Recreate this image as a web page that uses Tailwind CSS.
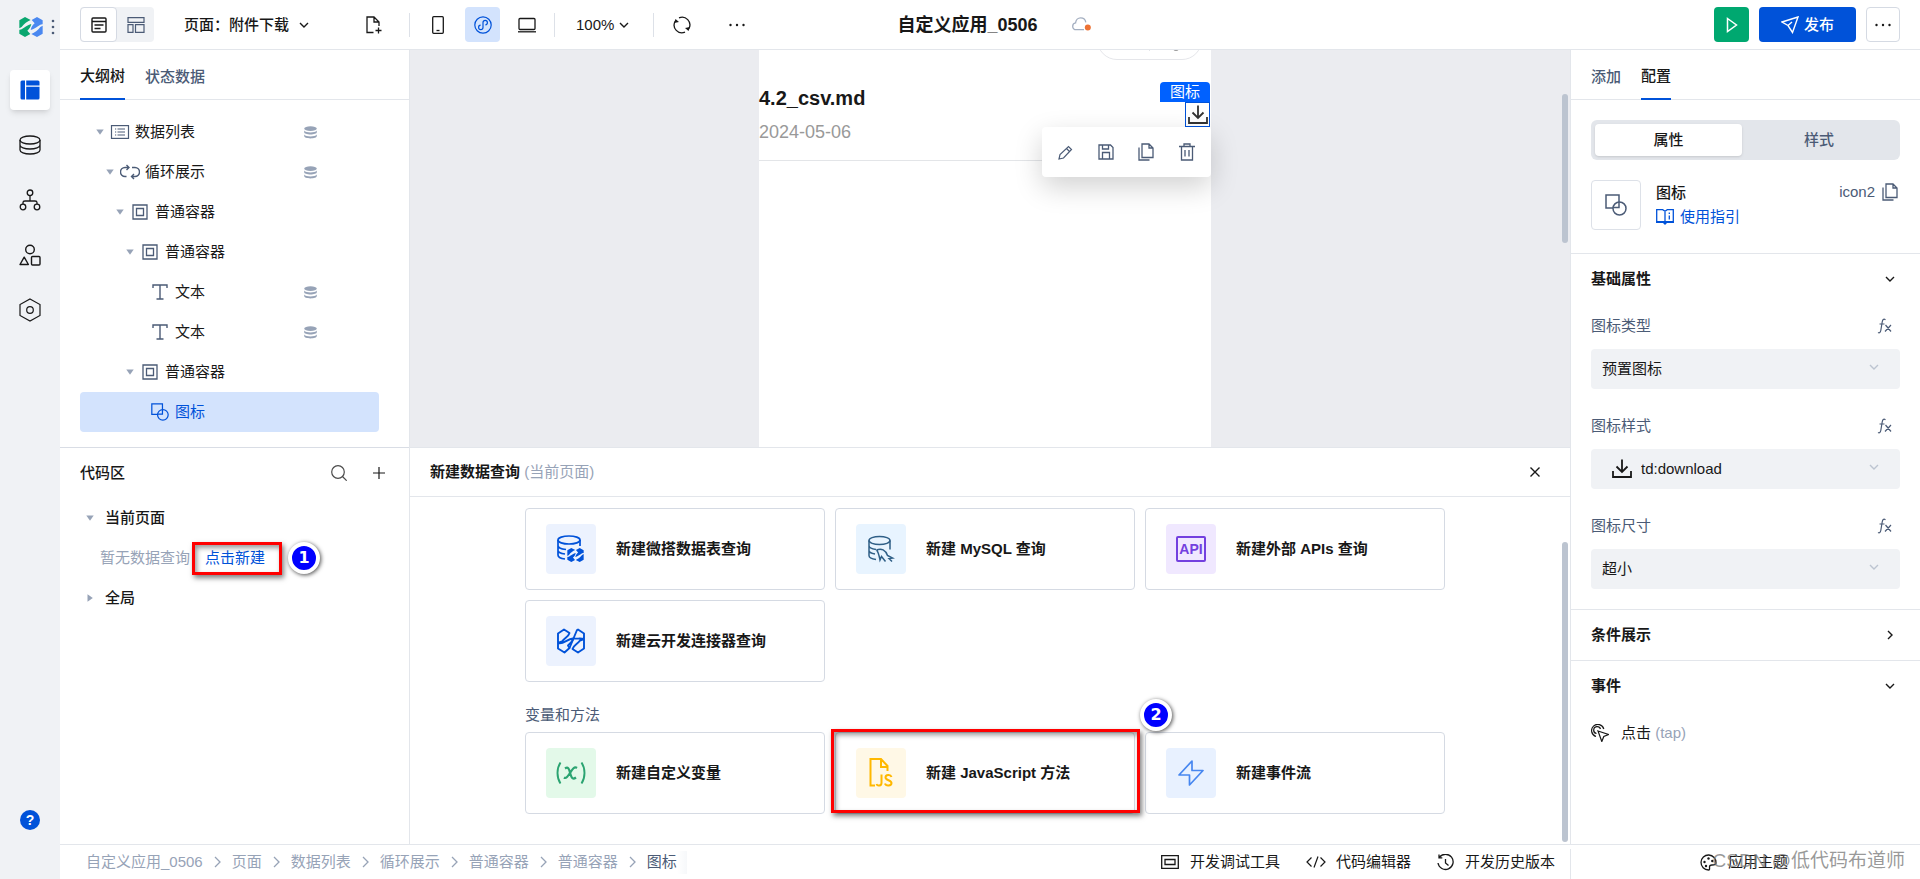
<!DOCTYPE html>
<html lang="zh-CN">
<head>
<meta charset="utf-8">
<meta name="viewport" content="width=device-width, initial-scale=1">
<title>自定义应用_0506</title>
<script src="https://cdn.jsdelivr.net/npm/@tailwindcss/browser@4"></script>
</head>
<body class="flex h-screen overflow-hidden bg-white font-['Liberation_Sans','Noto_Sans_CJK_SC',sans-serif] text-[15px] leading-5 text-[#181818]">

<svg class="hidden" aria-hidden="true">
  <symbol id="db" viewBox="0 0 13 13"><g fill="currentColor"><ellipse cx="6.500" cy="2.600" rx="6.300" ry="2.400"/><path d="M.2 4.600c1 1.400 3.500 1.900 6.300 1.900s5.300-.5 6.300-1.900v1.700c0 1.300-2.800 2.200-6.300 2.200S.2 7.600.2 6.300z"/><path d="M.2 8.500c1 1.400 3.500 1.900 6.300 1.900s5.300-.5 6.300-1.900v1.600c0 1.400-2.800 2.400-6.300 2.400S.2 11.500.2 10.100z"/></g></symbol>
  <symbol id="caret" viewBox="0 0 8 6"><path d="M.3.500h7.400L4 5.800z" fill="currentColor"/></symbol>
  <symbol id="down" viewBox="0 0 10 6"><path d="M1 1l4 4 4-4" fill="none" stroke="currentColor" stroke-width="1.400"/></symbol>
  <symbol id="box" viewBox="0 0 16 16"><g fill="none" stroke="currentColor" stroke-width="1.300"><path d="M1 1h14v14H1z"/><path d="M4.500 4.500h7v7h-7z"/></g></symbol>
  <symbol id="tee" viewBox="0 0 16 16"><path d="M1 4V1h14v3M8 1v14M4.500 15h7" fill="none" stroke="currentColor" stroke-width="1.400"/></symbol>
  <symbol id="shape" viewBox="0 0 22 22"><g fill="none" stroke="currentColor" stroke-width="1.500"><path d="M8 14H1V1h13v7"/><path d="M14 8v5.500H8"/><circle cx="14.500" cy="14.500" r="6.500"/></g></symbol>
  <symbol id="copy" viewBox="0 0 16 18"><path d="M4 1h7l4 4v9.500H4zM11 1v4h4M1 4.500V17h10.500" fill="none" stroke="currentColor" stroke-width="1.300"/></symbol>
  <symbol id="download" viewBox="0 0 20 20"><path d="M10 .500v12M4.500 7.500l5.500 5.500 5.500-5.500M1 12v6h18v-6" fill="none" stroke="currentColor" stroke-width="1.800"/></symbol>
  <symbol id="sep" viewBox="0 0 7 12"><path d="M1 1l5 5-5 5" fill="none" stroke="currentColor" stroke-width="1.300"/></symbol>
  <symbol id="fx" viewBox="0 0 16 16"><path d="M8.500 1.800C6.500.4 5.600 1.700 5.200 4L3.800 12.500C3.400 14.600 2.400 15.300 1 14.500M2.500 6h5M8.500 7l5.500 6.500M14 7l-6 6.500" fill="none" stroke="currentColor" stroke-width="1.200"/></symbol>
  <symbol id="dots" viewBox="0 0 16 4"><g fill="currentColor"><circle cx="1.500" cy="2" r="1.200"/><circle cx="8" cy="2" r="1.200"/><circle cx="14.500" cy="2" r="1.200"/></g></symbol>
  <symbol id="half" viewBox="0 0 72 60"><path fill="currentColor" d="M1 10L18 0l17 9C25 13 15 20 8 30L1 34zM1 38C8 40 16 28 37 21 35 30 31 36 25 41L34 51 18 60 1 50z"/></symbol>
</svg>

<nav class="flex w-15 shrink-0 flex-col items-center bg-[#f0f2f5]" aria-label="主导航">
  <button class="flex h-[54px] w-full items-center gap-2 pl-[19px]" aria-label="应用菜单">
    <svg class="h-5 w-6" viewBox="0 0 72 60"><use href="#half" width="72" height="60" class="text-[#0aa76f]"/><g transform="rotate(180 36 30)"><use href="#half" width="72" height="60" class="text-[#4a88f0]"/></g></svg>
    <svg class="h-4 w-1" viewBox="0 0 4 16" fill="#4b5b76"><circle cx="2" cy="2" r="1.300"/><circle cx="2" cy="8" r="1.300"/><circle cx="2" cy="14" r="1.300"/></svg>
  </button>
  <div class="flex flex-1 flex-col gap-[15px] pt-4">
    <button class="flex size-10 items-center justify-center rounded bg-white shadow-md" aria-label="页面设计"><svg class="size-5" viewBox="0 0 20 20" fill="#0052d9"><path d="M2 .500h3V19.500H2A1.500 1.500 0 0 1 .5 18V2A1.500 1.500 0 0 1 2 .5zM6.200.500H18A1.500 1.500 0 0 1 19.500 2v3.500H6.200zM6.200 6.700h13.300V18a1.500 1.500 0 0 1-1.500 1.500H6.200z"/></svg></button>
    <button class="flex size-10 items-center justify-center" aria-label="数据源"><svg class="h-5 w-[22px]" viewBox="0 0 22 20" fill="none" stroke="currentColor" stroke-width="1.300"><ellipse cx="11" cy="5" rx="10" ry="4"/><path d="M1 5v10c0 2.200 4.500 4 10 4s10-1.800 10-4V5M1 10c0 2.200 4.500 4 10 4s10-1.800 10-4"/></svg></button>
    <button class="flex size-10 items-center justify-center" aria-label="流程"><svg class="size-[22px]" viewBox="0 0 22 22" fill="none" stroke="currentColor" stroke-width="1.300"><circle cx="11" cy="3.800" r="2.800"/><path d="M11 6.600V12M4 15v-1.500C4 12.500 5 12 6 12h10c1 0 2 .5 2 1.500V15"/><circle cx="4" cy="18" r="2.800"/><circle cx="18" cy="18" r="2.800"/></svg></button>
    <button class="flex size-10 items-center justify-center" aria-label="组件"><svg class="size-[22px]" viewBox="0 0 22 22" fill="none" stroke="currentColor" stroke-width="1.400"><circle cx="11" cy="5.500" r="4.300"/><path d="M5.200 13.200l4.200 7.300H1z" stroke-linejoin="round"/><rect x="12.500" y="12.500" width="8.500" height="8.500" rx="1"/></svg></button>
    <button class="flex size-10 items-center justify-center" aria-label="设置"><svg class="h-6 w-[22px]" viewBox="0 0 22 24" fill="none" stroke="currentColor" stroke-width="1.200"><path d="M11 1l10 5.500v11L11 23 1 17.500v-11z"/><circle cx="11" cy="12" r="3.300"/></svg></button>
  </div>
  <button class="mb-[49px] flex size-5 items-center justify-center rounded-full bg-[#0052d9] text-sm font-bold text-white" aria-label="帮助">?</button>
</nav>

<div class="flex min-w-0 flex-1 flex-col">
  <header class="flex h-[50px] shrink-0 items-center border-b border-[#e3e6eb] pr-5 pl-5">
    <div class="flex flex-1 items-center">
      <div class="flex rounded bg-[#f0f2f5]">
        <button class="flex h-[35px] w-[37px] items-center justify-center rounded border border-[#d5dae3] bg-white" aria-label="设计视图"><svg class="size-4" viewBox="0 0 16 16" fill="none" stroke="currentColor" stroke-width="1.400"><rect x="1" y="1" width="14" height="14" rx="1"/><path d="M1 4.500h14M3.500 8h9M3.500 11.500h6"/></svg></button>
        <button class="flex h-[35px] w-[37px] items-center justify-center text-[#4b5b76]" aria-label="布局视图"><svg class="h-4 w-[18px]" viewBox="0 0 18 16" fill="none" stroke="currentColor" stroke-width="1.200"><path d="M1 .600h16v4.800H1zM1 7.600h5v7.800H1zM8.500 7.600H17v7.800H8.500z"/></svg></button>
      </div>
      <button class="ml-[30px] flex items-center gap-[10px] font-medium whitespace-nowrap">页面：附件下载<svg class="h-[6px] w-[10px]"><use href="#down"/></svg></button>
      <button class="ml-[57px]" aria-label="新建页面"><svg class="h-[18px] w-4" viewBox="0 0 16 18" fill="none" stroke="currentColor" stroke-width="1.300"><path d="M7.500 16.500H1V1h7l5 5v4M8 1v5h5M12.500 11.500v6M9.500 14.500h6"/></svg></button>
      <span class="ml-[27px] h-6 w-px bg-[#dde1e8]"></span>
      <button class="ml-[22px]" aria-label="手机"><svg class="h-[18px] w-3" viewBox="0 0 12 18" fill="none" stroke="currentColor" stroke-width="1.300"><rect x=".7" y=".7" width="10.600" height="16.600" rx="1"/><path d="M4.500 14.500h3"/></svg></button>
      <button class="ml-[21px] flex size-[35px] items-center justify-center rounded bg-[#d3e3fd] text-[#0052d9]" aria-label="小程序"><svg class="size-[18px]" viewBox="0 0 18 18" fill="none" stroke="currentColor" stroke-width="1.200"><circle cx="9" cy="9" r="8.200"/><path d="M6.600 9.200a2.200 2.200 0 1 0 2.400 2.300V6.500a2.200 2.200 0 1 1 2.400 2.300"/></svg></button>
      <button class="ml-[18px]" aria-label="电脑"><svg class="h-4 w-[18px]" viewBox="0 0 18 16" fill="none" stroke="currentColor" stroke-width="1.300"><rect x="1" y="1.500" width="16" height="11" rx="1"/><path d="M0 14.800h18"/></svg></button>
      <span class="ml-[18px] h-6 w-px bg-[#dde1e8]"></span>
      <button class="ml-[21px] flex items-center gap-[5px]">100%<svg class="h-[6px] w-[10px]"><use href="#down"/></svg></button>
      <span class="ml-6 h-6 w-px bg-[#dde1e8]"></span>
      <button class="ml-[19px]" aria-label="刷新"><svg class="size-[18px]" viewBox="0 0 18 18"><path d="M6 1.800A7.800 7.800 0 0 1 16 12.500M12 16.200A7.800 7.800 0 0 1 2 5.500" fill="none" stroke="currentColor" stroke-width="1.300"/><path d="M1 7l1.500-4 3.500 3zM17 11l-1.500 4-3.500-3z" fill="currentColor"/></svg></button>
      <button class="ml-[38px]" aria-label="更多工具"><svg class="h-1 w-4"><use href="#dots"/></svg></button>
    </div>
    <div class="flex items-center gap-[34px] pl-2">
      <h1 class="text-lg leading-6 font-bold whitespace-nowrap">自定义应用_0506</h1>
      <svg class="h-[15px] w-[19px]" viewBox="0 0 19 15"><path d="M12 12.700H4.500C2.300 12.700.7 11.200.7 9.200.7 7.300 2 6 3.600 5.800 3.900 3 6 .800 8.600.800c2.800 0 4.900 2 5.200 4.600" fill="none" stroke="#a3aec0" stroke-width="1.300"/><circle cx="15.800" cy="10.600" r="3" fill="#ed7234"/></svg>
    </div>
    <div class="flex flex-1 items-center justify-end gap-[10px]">
      <button class="flex size-[35px] items-center justify-center rounded bg-[#00a870] text-white" aria-label="预览"><svg class="h-4 w-3" viewBox="0 0 12 16" fill="none" stroke="currentColor" stroke-width="1.500"><path d="M1.500 1.500l9 6.500-9 6.500z"/></svg></button>
      <button class="flex h-[35px] w-[97px] items-center justify-center gap-[5px] rounded bg-[#0052d9] font-medium text-white"><svg class="size-[18px]" viewBox="0 0 18 18" fill="none" stroke="currentColor" stroke-width="1.400"><path d="M17 1L1 6l6 3.500L11.500 16.500zM7 9.500l4-3.500"/></svg>发布</button>
      <button class="flex h-[35px] w-[34px] items-center justify-center rounded border border-[#d5dae3]" aria-label="更多"><svg class="h-1 w-4"><use href="#dots"/></svg></button>
    </div>
  </header>

  <div class="flex min-h-0 flex-1">
    <aside class="flex w-[350px] shrink-0 flex-col border-r border-[#e3e6eb]">
      <section class="min-h-0 flex-1 basis-0">
        <div class="flex h-[50px] gap-5 border-b border-[#e3e6eb] px-5 font-medium">
          <button class="-mb-px border-b-2 border-[#0052d9] pt-1">大纲树</button>
          <button class="pt-1 text-[#4b5b76]">状态数据</button>
        </div>
        <ul class="pt-3 pr-[30px] pl-5">
          <li class="flex h-10 items-center pr-[62px] pl-[10px]"><svg class="mx-[6px] h-[6px] w-2 text-[#97a3b7]"><use href="#caret"/></svg><svg class="mr-[5px] h-[14px] w-5 text-[#4b5b76]" viewBox="0 0 20 14" fill="none" stroke="currentColor" stroke-width="1.200"><rect x="1.500" y=".6" width="17" height="12.800"/><path d="M7.500 4H15M7.500 7H15M7.500 10H15M5 4h1.200M5 7h1.200M5 10h1.200"/></svg><span class="flex-1">数据列表</span><svg class="size-[13px] text-[#97a3b7]"><use href="#db"/></svg></li>
          <li class="flex h-10 items-center pr-[62px] pl-5"><svg class="mx-[6px] h-[6px] w-2 text-[#97a3b7]"><use href="#caret"/></svg><svg class="mr-[5px] h-4 w-5 text-[#4b5b76]" viewBox="0 0 20 16" fill="none" stroke="currentColor" stroke-width="1.400"><path d="M6.500 12.500H5A4.300 4.300 0 0 1 5 3.500h3.500M6.500 1l2.500 2.500L6.500 6M12 3.500h3a4.300 4.300 0 0 1 0 9h-3.500M14 10l-2.500 2.500L14 15"/></svg><span class="flex-1">循环展示</span><svg class="size-[13px] text-[#97a3b7]"><use href="#db"/></svg></li>
          <li class="flex h-10 items-center pl-[30px]"><svg class="mx-[6px] h-[6px] w-2 text-[#97a3b7]"><use href="#caret"/></svg><svg class="mr-[7px] ml-[2px] size-4 text-[#4b5b76]"><use href="#box"/></svg>普通容器</li>
          <li class="flex h-10 items-center pl-10"><svg class="mx-[6px] h-[6px] w-2 text-[#97a3b7]"><use href="#caret"/></svg><svg class="mr-[7px] ml-[2px] size-4 text-[#4b5b76]"><use href="#box"/></svg>普通容器</li>
          <li class="flex h-10 items-center pr-[62px] pl-[70px]"><svg class="mr-[7px] ml-[2px] size-4 text-[#4b5b76]"><use href="#tee"/></svg><span class="flex-1">文本</span><svg class="size-[13px] text-[#97a3b7]"><use href="#db"/></svg></li>
          <li class="flex h-10 items-center pr-[62px] pl-[70px]"><svg class="mr-[7px] ml-[2px] size-4 text-[#4b5b76]"><use href="#tee"/></svg><span class="flex-1">文本</span><svg class="size-[13px] text-[#97a3b7]"><use href="#db"/></svg></li>
          <li class="flex h-10 items-center pl-10"><svg class="mx-[6px] h-[6px] w-2 text-[#97a3b7]"><use href="#caret"/></svg><svg class="mr-[7px] ml-[2px] size-4 text-[#4b5b76]"><use href="#box"/></svg>普通容器</li>
          <li class="flex h-10 items-center rounded bg-[#d3e3fd] pl-[70px] text-[#0052d9]"><svg class="mr-[6px] ml-px size-[18px]"><use href="#shape"/></svg>图标</li>
        </ul>
      </section>
      <section class="min-h-0 flex-1 basis-0 border-t border-[#d9dde5]">
        <div class="flex h-[50px] items-center pr-6 pl-5">
          <h2 class="flex-1 font-medium">代码区</h2>
          <button class="mr-[26px]" aria-label="搜索"><svg class="size-4 text-[#4b4b4b]" viewBox="0 0 16 16" fill="none" stroke="currentColor" stroke-width="1.200"><circle cx="7" cy="7" r="6.300"/><path d="M11.500 11.500L15.700 15.700"/></svg></button>
          <button aria-label="新增"><svg class="size-3" viewBox="0 0 12 12" fill="none" stroke="currentColor" stroke-width="1.200"><path d="M6 0v12M0 6h12"/></svg></button>
        </div>
        <div class="flex h-10 items-center pl-[26px] font-medium"><svg class="mr-[11px] h-[6px] w-2 text-[#97a3b7]"><use href="#caret"/></svg>当前页面</div>
        <div class="flex h-10 items-center pl-10 text-[#97a3b7]">暂无数据查询
          <div class="relative ml-[15px]">
            <a href="#new" class="text-[#0052d9]">点击新建</a>
            <span class="pointer-events-none absolute -top-[6px] -right-[17px] -left-[13px] h-[33px] border-3 border-[#ff0000] shadow-[2px_3px_5px_rgba(0,0,0,.5),inset_2px_3px_5px_rgba(0,0,0,.4)]"></span>
            <span class="absolute -top-[6px] -right-[55px] flex size-8 items-center justify-center rounded-full border-4 border-white bg-[#0000ff] font-['DejaVu_Sans',sans-serif] text-base font-bold text-white shadow-[1px_1px_4px_rgba(0,0,0,.7)]">1</span>
          </div>
        </div>
        <div class="flex h-10 items-center pl-[26px] font-medium"><svg class="mr-[11px] h-[6px] w-2 -rotate-90 text-[#97a3b7]"><use href="#caret"/></svg>全局</div>
      </section>
    </aside>

    <main class="flex min-w-0 flex-1 flex-col">
      <section class="flex min-h-0 flex-1 basis-0 justify-center bg-[#ebecf0]">
        <div class="flex flex-1 justify-center">
          <div class="relative w-[452px] bg-white">
            <div class="absolute top-0 right-[9px] h-[10px] w-[105px] overflow-hidden">
              <div class="absolute bottom-0 flex h-10 w-full items-center justify-center rounded-full border border-[#e5e6ea]"><span class="h-[22px] w-px bg-[#e5e6ea]"></span><span class="absolute right-[22px] bottom-[8px] size-[6px] rounded-full bg-[#999]"></span></div>
            </div>
            <div class="flex flex-col gap-2 border-b border-[#e3e5e8] pt-[34px] pb-4">
              <strong class="text-xl leading-7">4.2_csv.md</strong>
              <span class="text-lg leading-6 text-[#999]">2024-05-06</span>
            </div>
            <div class="absolute top-8 right-px h-5 w-[50px] rounded-t bg-[#0061ff] text-center leading-5 text-white">图标</div>
            <div class="absolute top-[52px] right-px flex size-[25px] items-center justify-center border border-[#0052d9] text-[#333]"><svg class="size-5"><use href="#download"/></svg></div>
            <div class="absolute top-[77px] right-0 flex h-[50px] w-[169px] items-center justify-around rounded bg-white px-1 text-[#4b5b76] shadow-[0_10px_28px_rgba(0,0,0,.18)]">
              <button aria-label="编辑"><svg class="size-[15px]" viewBox="0 0 15 15" fill="none" stroke="currentColor" stroke-width="1.200"><path d="M1 14l1-4.500L10.500 1.500l3 3L5.500 13zM8.500 3.500l3 3"/></svg></button>
              <button aria-label="保存"><svg class="size-4" viewBox="0 0 16 16" fill="none" stroke="currentColor" stroke-width="1.300"><path d="M1 1h11.500L15 3.500V15H1zM4.500 1v4h6V1M4.500 15V8.500h7V15"/></svg></button>
              <button aria-label="复制"><svg class="h-[18px] w-4"><use href="#copy"/></svg></button>
              <button aria-label="删除"><svg class="h-[18px] w-4" viewBox="0 0 16 18" fill="none" stroke="currentColor" stroke-width="1.300"><path d="M0 3.500h16M5 3.500V1h6v2.500M2.500 3.500V17h11V3.500M6 7v6.500M10 7v6.500"/></svg></button>
            </div>
          </div>
        </div>
        <div class="w-[10px] px-[2px] pt-11"><div class="h-[149px] rounded-full bg-[#bcc4d0]"></div></div>
      </section>

      <section class="flex min-h-0 flex-1 basis-0 flex-col border-t border-[#e3e6eb]">
        <div class="flex h-[49px] shrink-0 items-center border-b border-[#e3e6eb] pr-[30px] pl-5">
          <h2 class="flex-1 font-bold">新建数据查询 <span class="font-normal text-[#97a3b7]">(当前页面)</span></h2>
          <button aria-label="关闭"><svg class="size-[10px]" viewBox="0 0 10 10" fill="none" stroke="currentColor" stroke-width="1.400"><path d="M.500.500l9 9M9.500.500l-9 9"/></svg></button>
        </div>
        <div class="flex min-h-0 flex-1">
          <div class="flex min-w-0 flex-1 flex-col items-center justify-end overflow-hidden pb-[30px]">
            <div class="flex w-[920px] max-w-full flex-col text-[#4b5b76]">
              <h3 class="mb-[10px]">数据 Query</h3>
              <div class="mb-[23px] grid grid-cols-3 gap-[10px] font-bold text-[#181818]">
                <button class="flex h-[82px] items-center gap-5 rounded border border-[#d5dae3] px-5 text-left"><span class="flex size-[50px] items-center justify-center rounded bg-[#ecf2fe] text-[#0052d9]"><svg class="size-7" viewBox="0 0 28 28"><path d="M1 5v15c0 2 3 3.500 7 4M23 5v6M1 10.500c0 2 3.500 3.500 8 4M1 15.500c0 2 3 3 7 3.500" fill="none" stroke="currentColor" stroke-width="1.700"/><ellipse cx="12" cy="5" rx="11" ry="4" fill="none" stroke="currentColor" stroke-width="1.700"/><svg x="10" y="13" width="17" height="14" viewBox="0 0 72 60"><use href="#half" width="72" height="60"/><g transform="rotate(180 36 30)"><use href="#half" width="72" height="60"/></g></svg></svg></span>新建微搭数据表查询</button>
                <button class="flex h-[82px] items-center gap-5 rounded border border-[#d5dae3] px-5 text-left"><span class="flex size-[50px] items-center justify-center rounded bg-[#e8f4ff] text-[#2f5f87]"><svg class="size-7" viewBox="0 0 28 28" fill="none" stroke="currentColor" stroke-width="1.500"><ellipse cx="12.500" cy="5.500" rx="10.500" ry="4"/><path d="M2 5.500v15c0 2 3 3.500 7 4M23 5.500v9M2 10.500c0 2 3 3.500 7 4M2 15.500c0 2 3 3 6 3.500M9.500 15c5-2 9 0 11 5.500l5 2.500-3.500.5 3 3M9.500 15c2 2 2.500 5 3.500 10l1.500-3.500 4 5"/></svg></span>新建 MySQL 查询</button>
                <button class="flex h-[82px] items-center gap-5 rounded border border-[#d5dae3] px-5 text-left"><span class="flex size-[50px] items-center justify-center rounded bg-[#f0e8ff] text-[#7340df]"><span class="flex h-[26px] w-[30px] items-center justify-center rounded-xs border-2 border-current text-sm font-bold">API</span></span>新建外部 APIs 查询</button>
                <button class="flex h-[82px] items-center gap-5 rounded border border-[#d5dae3] px-5 text-left"><span class="flex size-[50px] items-center justify-center rounded bg-[#ecf2fe] text-[#0052d9]"><svg class="h-[26px] w-7" viewBox="0 0 28 26" fill="none" stroke="currentColor" stroke-width="1.900" stroke-linejoin="round"><path d="M1 5.500L7 1.500l5.500 3.500c-1 4-5 5-7.500 8.500L1 15zM1 15c5 2 9-4 15-4.500 0 3-3 5-5 7L12.500 20l-5 4.500-6.500-4z"/><path d="M27 20.500l-6 4-5.500-3.500c1-4 5-5 7.500-8.500l4-1.500zM27 11c-3-1-7 0-11-.5M12.500 20L20 2l1-.5 6 4V11"/></svg></span>新建云开发连接器查询</button>
              </div>
              <h3 class="mb-[7px]">变量和方法</h3>
              <div class="grid grid-cols-3 gap-[10px] font-bold text-[#181818]">
                <button class="flex h-[82px] items-center gap-5 rounded border border-[#d5dae3] px-5 text-left"><span class="flex size-[50px] items-center justify-center rounded bg-[#e3f9e9] text-[#2ba471]"><svg class="h-6 w-[30px]" viewBox="0 0 30 24" fill="none" stroke="currentColor" stroke-width="1.900"><path d="M4.500 1.500c-4 6-4 15 0 21M25.500 1.500c4 6 4 15 0 21"/><path d="M9 7.500c3-2 4 0 5 4s2 8 6 5M21 7c-3-2-5 2-7 5s-4 6-6 4.500" stroke-width="2.200"/></svg></span>新建自定义变量</button>
                <div class="relative">
                  <button class="flex h-[82px] w-full items-center gap-5 rounded border border-[#d5dae3] px-5 text-left"><span class="flex size-[50px] items-center justify-center rounded bg-[#fff8e6] text-[#ffb800]"><svg class="h-[30px] w-6" viewBox="0 0 24 30" fill="none" stroke="currentColor" stroke-width="2"><path d="M6 27.500H1.500V1H12l6.500 7v5M12 1v8h6.500M12.500 16.500V25c0 3-4 3.500-5 1M22.500 19c-1-3-6-2.500-6 .5s6 2.500 6 5.500-5.500 3.500-6.500 .5"/></svg></span>新建 JavaScript 方法</button>
                  <span class="pointer-events-none absolute -top-[3px] -right-[5px] bottom-px -left-[4px] border-3 border-[#ff0000] shadow-[2px_3px_5px_rgba(0,0,0,.5),inset_2px_3px_5px_rgba(0,0,0,.4)]"></span>
                  <span class="absolute -top-[33px] -right-[37px] flex size-8 items-center justify-center rounded-full border-4 border-white bg-[#0000ff] font-['DejaVu_Sans',sans-serif] text-base font-bold text-white shadow-[1px_1px_4px_rgba(0,0,0,.7)]">2</span>
                </div>
                <button class="flex h-[82px] items-center gap-5 rounded border border-[#d5dae3] px-5 text-left"><span class="flex size-[50px] items-center justify-center rounded bg-[#e8f1ff] text-[#4787f0]"><svg class="size-[26px]" viewBox="0 0 26 26" fill="none" stroke="currentColor" stroke-width="1.700" stroke-linejoin="round"><path d="M14 1L1 15h10.500v10L25 10.500H14z"/></svg></span>新建事件流</button>
              </div>
            </div>
          </div>
          <div class="flex w-[10px] flex-col px-[2px] pt-[45px] pb-[2px]"><div class="flex-1 rounded-full bg-[#bcc4d0]"></div></div>
        </div>
      </section>
    </main>

    <aside class="w-[350px] shrink-0 overflow-hidden border-l border-[#e3e6eb]">
      <div class="flex h-[50px] gap-5 border-b border-[#e3e6eb] px-5 font-medium">
        <button class="pt-1 text-[#4b5b76]">添加</button>
        <button class="-mb-px border-b-2 border-[#0052d9] pt-1">配置</button>
      </div>
      <div class="px-5 pt-5 pb-[23px]">
        <div class="flex h-10 rounded-md bg-[#e3e6eb] p-1 font-medium">
          <button class="w-[147px] rounded-sm bg-white shadow-sm">属性</button>
          <button class="flex-1 text-[#4b5b76]">样式</button>
        </div>
        <div class="mt-5 flex">
          <span class="flex size-[50px] items-center justify-center rounded border border-[#dde1e8] text-[#4b5b76]"><svg class="size-[22px]"><use href="#shape"/></svg></span>
          <div class="ml-[15px] flex flex-1 flex-col gap-1 pt-[3px]">
            <strong class="font-medium">图标</strong>
            <a href="#guide" class="flex items-center gap-[6px] text-[#0052d9]"><svg class="h-4 w-[18px]" viewBox="0 0 18 16"><path d="M.700.700h6l2.300 1.500L11.300.700h6v12H.700zM9 2.200V13M13.300 6.500v4M13.300 3.500v1.500" fill="none" stroke="currentColor" stroke-width="1.300"/><path d="M0 12.500h18V14h-7l-2 2-2-2H0z" fill="currentColor"/></svg>使用指引</a>
          </div>
          <div class="flex h-6 items-center gap-[7px] text-[#4b5b76]">icon2<button aria-label="复制标识"><svg class="mr-[2px] h-[18px] w-4"><use href="#copy"/></svg></button></div>
        </div>
      </div>
      <section class="border-t border-[#e3e6eb] px-5 pb-5">
        <div class="flex h-[50px] items-center justify-between pr-[5px]"><h3 class="font-bold">基础属性</h3><svg class="h-[6px] w-[10px]"><use href="#down"/></svg></div>
        <div class="flex flex-col gap-[27px] pt-3">
          <div>
            <div class="flex h-5 items-center justify-between pr-[7px] text-[#4b5b76]"><label for="type">图标类型</label><button aria-label="绑定图标类型"><svg class="size-4"><use href="#fx"/></svg></button></div>
            <div class="relative mt-[13px]"><select id="type" class="h-10 w-full appearance-none rounded bg-[#f0f2f5] px-[11px]"><option>预置图标</option></select><svg class="pointer-events-none absolute top-[15px] right-[21px] h-[6px] w-[10px] text-[#bcc4d0]"><use href="#down"/></svg></div>
          </div>
          <div>
            <div class="flex h-5 items-center justify-between pr-[7px] text-[#4b5b76]"><label for="style">图标样式</label><button aria-label="绑定图标样式"><svg class="size-4"><use href="#fx"/></svg></button></div>
            <div class="relative mt-[13px]"><select id="style" class="h-10 w-full appearance-none rounded bg-[#f0f2f5] pr-[11px] pl-[50px]"><option>td:download</option></select><svg class="pointer-events-none absolute top-[10px] left-[21px] size-5"><use href="#download"/></svg><svg class="pointer-events-none absolute top-[15px] right-[21px] h-[6px] w-[10px] text-[#bcc4d0]"><use href="#down"/></svg></div>
          </div>
          <div>
            <div class="flex h-5 items-center justify-between pr-[7px] text-[#4b5b76]"><label for="size">图标尺寸</label><button aria-label="绑定图标尺寸"><svg class="size-4"><use href="#fx"/></svg></button></div>
            <div class="relative mt-[13px]"><select id="size" class="h-10 w-full appearance-none rounded bg-[#f0f2f5] px-[11px]"><option>超小</option></select><svg class="pointer-events-none absolute top-[15px] right-[21px] h-[6px] w-[10px] text-[#bcc4d0]"><use href="#down"/></svg></div>
          </div>
        </div>
      </section>
      <section class="border-t border-[#e3e6eb] px-5">
        <div class="flex h-[50px] items-center justify-between pr-[5px]"><h3 class="font-bold">条件展示</h3><svg class="h-[6px] w-[10px] -rotate-90"><use href="#down"/></svg></div>
      </section>
      <section class="border-t border-[#e3e6eb] px-5">
        <div class="flex h-[50px] items-center justify-between pr-[5px]"><h3 class="font-bold">事件</h3><svg class="h-[6px] w-[10px]"><use href="#down"/></svg></div>
        <button class="mt-3 flex items-center"><svg class="mr-3 size-[18px]" viewBox="0 0 18 18" fill="none" stroke="currentColor" stroke-width="1.200"><path d="M5 12.500A6.200 6.200 0 1 1 12.800 5M5.500 9.500A3.500 3.500 0 1 1 9.500 5"/><path d="M7 7l10.500 3.500-4.700 2-2 5z"/></svg>点击&nbsp;<span class="text-[#97a3b7]">(tap)</span></button>
      </section>
    </aside>
  </div>

  <footer class="flex h-[35px] shrink-0 border-t border-[#e3e6eb] whitespace-nowrap">
    <div class="flex flex-1 items-center justify-between pr-[15px] pl-[26px]">
      <ol class="flex items-center gap-[11px] text-[#97a3b7]">
        <li><a href="#app">自定义应用_0506</a></li>
        <li><svg class="h-3 w-[7px]"><use href="#sep"/></svg></li>
        <li><a href="#page">页面</a></li>
        <li><svg class="h-3 w-[7px]"><use href="#sep"/></svg></li>
        <li><a href="#list">数据列表</a></li>
        <li><svg class="h-3 w-[7px]"><use href="#sep"/></svg></li>
        <li><a href="#loop">循环展示</a></li>
        <li><svg class="h-3 w-[7px]"><use href="#sep"/></svg></li>
        <li><a href="#c1">普通容器</a></li>
        <li><svg class="h-3 w-[7px]"><use href="#sep"/></svg></li>
        <li><a href="#c2">普通容器</a></li>
        <li><svg class="h-3 w-[7px]"><use href="#sep"/></svg></li>
        <li class="flex items-center text-[#4b5b76]">图标<span class="h-[23px] w-[10px] bg-linear-to-r from-white to-[#f6f8fa]"></span></li>
      </ol>
      <div class="flex items-center gap-[26px]">
        <button class="flex items-center gap-[11px]"><svg class="h-[14px] w-[18px]" viewBox="0 0 18 14" fill="none" stroke="currentColor" stroke-width="1.300"><path d="M.7.700h16.600v12.600H.7zM4 4.500h10v5H4z"/></svg>开发调试工具</button>
        <button class="flex items-center gap-[10px]"><svg class="h-3 w-5" viewBox="0 0 20 12" fill="none" stroke="currentColor" stroke-width="1.200"><path d="M5.500 1.500L1 6l4.500 4.500M14.500 1.500L19 6l-4.500 4.500M12 .500L8 11.500"/></svg>代码编辑器</button>
        <button class="flex items-center gap-[11px]"><svg class="size-[17px]" viewBox="0 0 17 17" fill="none" stroke="currentColor" stroke-width="1.300"><path d="M2.500 3.200A7.600 7.600 0 1 1 1 9M2 .500v3.300h3.300M8.500 5v4l3 2.500"/></svg>开发历史版本</button>
      </div>
    </div>
    <div class="relative mt-1 flex w-[350px] items-center border-l border-[#e3e6eb] pb-1 pl-[129px]">
      <button class="flex items-center gap-[11px]"><svg class="size-[17px]" viewBox="0 0 17 17" fill="none" stroke="currentColor" stroke-width="1.300"><path d="M16 9A7.500 7.500 0 1 0 8.500 16c1.500 0 1-1.800 1-3 0-1.500 1-2 2.500-2 2 0 4 0 4-2z"/><g fill="currentColor" stroke="none"><circle cx="4.500" cy="8" r="1.200"/><circle cx="8.500" cy="4.500" r="1.200"/><circle cx="12.300" cy="7" r="1.200"/><circle cx="6" cy="12" r="1.200"/></g></svg>应用主题</button>
      <span class="pointer-events-none absolute top-0 right-[15px] text-[19px] leading-6 text-[#777]/75">CSDN @低代码布道师</span>
    </div>
  </footer>
</div>
</body>
</html>
